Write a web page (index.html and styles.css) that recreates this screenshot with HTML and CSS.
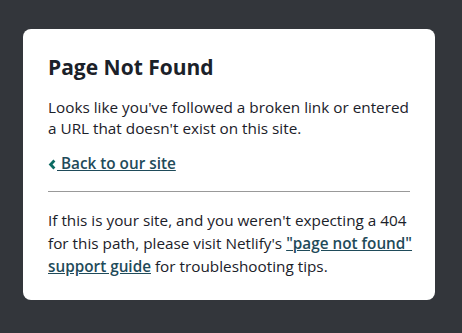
FILE: index.html
```html
<!DOCTYPE html>
<html>
<head>
<meta charset="utf-8">
<link rel="stylesheet" href="styles.css">
</head>
<body>
<main class="card">
  <h1 class="title">Page Not Found</h1>
  <p class="text">Looks like you've followed a broken link or entered a URL that doesn't exist on this site.</p>
  <p class="back"><a class="link" href="#"><span class="chev"><svg width="9" height="11" viewBox="0 0 9 11"><path d="M6.4 1.6 L2.6 5.5 L6.4 9.4" fill="none" stroke="#0d6b63" stroke-width="2.8"/></svg></span> Back to our site</a></p>
  <hr class="rule">
  <p class="text small">If this is your site, and you weren't expecting a 404 for this path, please visit Netlify's <a class="link" href="#">"page not found" support guide</a> for troubleshooting tips.</p>
</main>
</body>
</html>
```
FILE: styles.css
```css
html, body { margin: 0; padding: 0; }
body {
  background: #33363b;
  font-family: "Open Sans", "Noto Sans", sans-serif;
  color: #1b2129;
  width: 462px;
  height: 333px;
  padding-top: 29px;
  box-sizing: border-box;
}
.card {
  background: #fff;
  width: 412px;
  margin-left: 23px;
  height: 271px;
  box-sizing: border-box;
  border-radius: 8px;
  padding: 24px 20px 24px 25px;
}
.title {
  margin: 0 0 16px;
  font-size: 21px;
  font-weight: 700;
  line-height: 28px;
}
.text {
  margin: 0;
  font-size: 15.3px;
  line-height: 21px;
}
.back {
  margin: 14px 0 0;
  font-size: 15.3px;
  line-height: 21px;
}
.link {
  color: #1f4b5a;
  font-weight: 600;
  text-decoration: underline;
}
.chev svg { vertical-align: -1px; }
.rule {
  border: 0;
  border-top: 1px solid #999;
  margin: 17px 5px 17px 0;
}
.small { line-height: 23px; }
```
